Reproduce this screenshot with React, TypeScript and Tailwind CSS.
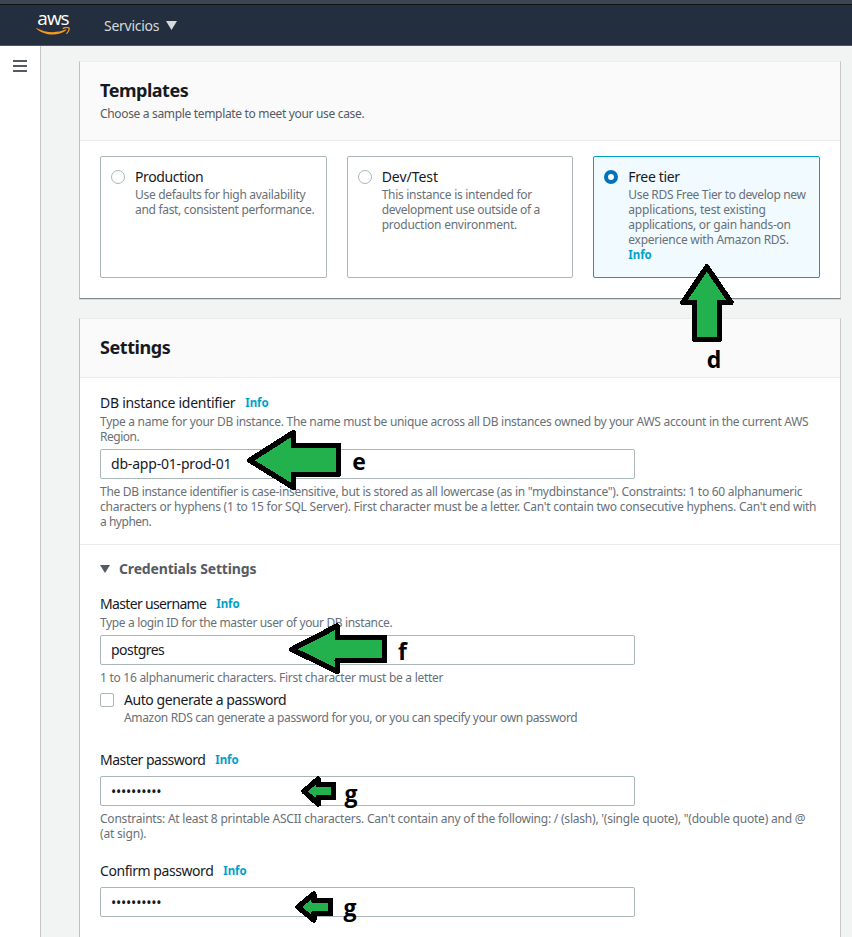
import React, { useLayoutEffect, useRef, useState } from "react";

type LineProps = { text: string; w: number; className?: string };

/** One line of text whose tracking is adjusted so that it spans `w` pixels. */
function Line({ text, w, className = "" }: LineProps) {
  const ref = useRef<HTMLSpanElement>(null);
  const [spacing, setSpacing] = useState(0);
  useLayoutEffect(() => {
    if (ref.current) {
      const natural = ref.current.getBoundingClientRect().width;
      setSpacing((w + 0.3 - natural) / text.length);
    }
  }, [text, w]);
  return (
    <span className={`flex overflow-visible whitespace-pre ${className}`}>
      <span ref={ref} className="block shrink-0" style={{ letterSpacing: `${spacing}px` }}>
        {text}
      </span>
    </span>
  );
}

function Hint({ lines, className = "" }: { lines: [string, number][]; className?: string }) {
  return (
    <div className={`text-[12px] leading-[15px] text-[#687078] ${className}`}>
      {lines.map(([text, w]) => (
        <Line key={text} text={text} w={w} />
      ))}
    </div>
  );
}

function Info() {
  return <Line text="Info" w={23} className="text-[11.5px] font-bold text-[#00a1c9]" />;
}

function Label({ text, w }: { text: string; w: number }) {
  return (
    <div className="flex h-[22px] items-center gap-[10px] leading-[22px] text-[#16191f]">
      <Line text={text} w={w} className="text-[14px]" />
      <Info />
    </div>
  );
}

function Field({ text, w, className = "" }: { text: string; w: number; className?: string }) {
  return (
    <div
      className={`h-[30px] w-[535px] rounded-[2px] border border-[#aab7b8] bg-white pt-[3px] pl-[10px] text-[14px] leading-[22px] text-[#16191f] ${className}`}
    >
      <Line text={text} w={w} />
    </div>
  );
}

function Dots({ className = "" }: { className?: string }) {
  return (
    <div
      className={`h-[30px] w-[535px] rounded-[2px] border border-[#aab7b8] bg-white pt-[4px] pl-[10px] text-[14px] leading-[22px] text-[#16191f] ${className}`}
    >
      <Line text="••••••••••" w={50} />
    </div>
  );
}

type TileProps = {
  title: string;
  w: number;
  lines: [string, number][];
  selected?: boolean;
};

function Tile({ title, w, lines, selected }: TileProps) {
  return (
    <div
      className={`flex h-[122px] gap-[10px] rounded-[2px] border pt-[9px] pl-[10px] ${
        selected ? "border-[#00a1c9] bg-[#f1faff]" : "border-[#aab7b8] bg-white"
      }`}
    >
      <span
        className={`mt-[4px] h-[14px] w-[14px] shrink-0 rounded-full bg-white ${
          selected ? "border-[4px] border-[#0073bb]" : "border border-[#aab7b8]"
        }`}
      />
      <div>
        <Line text={title} w={w} className="text-[14px] leading-[22px] text-[#16191f]" />
        <Hint lines={lines} className="-mt-px" />
        {selected && (
          <div className="leading-[15px]">
            <Info />
          </div>
        )}
      </div>
    </div>
  );
}

function Caret({ className }: { className: string }) {
  return (
    <svg viewBox="0 0 10 8" preserveAspectRatio="none" className={className}>
      <path d="M0 0H10L5 8Z" fill="currentColor" />
    </svg>
  );
}

const arrows = [
  "706.8,267 731,302.3 719.5,302.3 719.5,339.2 694.5,339.2 694.5,302.3 683,302.3",
  "249.8,460.3 293.5,432.5 293.5,445.5 338.5,445.5 338.5,474.2 293.5,474.2 293.5,487.5",
  "292,649.3 337.2,626 337.2,637.5 384.5,637.5 384.5,660.5 337.2,660.5 337.2,671.7",
  "304,791.3 318.2,779 318.2,784.5 333.5,784.5 333.5,797.5 318.2,797.5 318.2,804",
  "298,907 313.8,894 313.8,900.5 330.5,900.5 330.5,913.5 313.8,913.5 313.8,920",
];

const marks = [
  { t: "d", x: 714, y: 368 },
  { t: "e", x: 359, y: 470 },
  { t: "f", x: 402.5, y: 660 },
  { t: "g", x: 351, y: 802 },
  { t: "g", x: 350, y: 916 },
];

function Annotations() {
  return (
    <svg
      className="pointer-events-none absolute top-0 left-0 h-[937px] w-[852px] font-['Open_Sans',sans-serif]"
      viewBox="0 0 852 937"
    >
      {arrows.map((points) => (
        <polygon
          key={points}
          points={points}
          fill="#22b14c"
          stroke="#000"
          strokeWidth="5.4"
          strokeLinejoin="round"
          shapeRendering="crispEdges"
        />
      ))}
      {marks.map((m) => (
        <text key={m.y} x={m.x} y={m.y} textAnchor="middle" fontSize="23" fontWeight="700">
          {m.t}
        </text>
      ))}
    </svg>
  );
}

const cardBorder =
  "mx-[38px] w-[762px] border border-t-[#eaeded] border-r-[#c3caca] border-l-[#b9c1c2] bg-white";

export default function App() {
  return (
    <div className="relative flex h-[937px] w-[852px] flex-col overflow-hidden bg-[#f2f3f3] font-['Noto_Sans',sans-serif]">
      <header className="flex h-[46px] shrink-0 flex-col border-b border-[#4b5663] bg-[#232f3e]">
        <div className="h-[5px] border-b border-[#101215] bg-[#3b4652]" />
        <div className="flex h-[40px] pl-[36px]">
          <div className="flex w-[34px] flex-col items-center pt-[7px]">
            <Line
              text="aws"
              w={31}
              className="h-[15px] font-['Open_Sans',sans-serif] text-[19px] leading-[12px] font-medium text-white"
            />
            <svg viewBox="0 0 34 9" className="h-[9px] w-[34px] text-[#f79a1f]">
              <path
                d="M.4 1C9.5 6.2 21.5 6.2 29.6 2.6C30.4 2.4 30.8 3 30 3.6C22 9.2 8.5 9 .2 1.5Z"
                fill="currentColor"
              />
              <path
                d="M27.3 1.4C29.6 .3 32.2 .5 33 1C33.4 2.7 32.2 5 30.8 6.4"
                fill="none"
                stroke="currentColor"
                strokeWidth="1.3"
                strokeLinecap="round"
              />
            </svg>
          </div>
          <div className="ml-[34px] flex items-center gap-[7px] text-[#d5dbdb]">
            <Line text="Servicios" w={55} className="text-[14px]" />
            <Caret className="h-[9px] w-[11px]" />
          </div>
        </div>
      </header>

      <div className="flex flex-1">
        <aside className="w-[41px] shrink-0 border-r border-[#c1c7c7] bg-white">
          <div className="mt-[14px] ml-[13px] flex w-[14px] flex-col gap-[3px]">
            <span className="h-[2px] bg-[#545b64]" />
            <span className="h-[2px] bg-[#545b64]" />
            <span className="h-[2px] bg-[#545b64]" />
          </div>
        </aside>

        <main className="flex flex-1 flex-col pt-[15px]">
          <section className={`${cardBorder} h-[238px] border-b-[#7d8a8c] shadow-[0_1px_0_0_#d5dadb]`}>
            <div className="h-[79px] border-b border-[#eaeded] bg-[#fafafa] pt-[17px] pl-[20px]">
              <Line
                text="Templates"
                w={88}
                className="text-[18px] leading-[22px] font-bold text-[#16191f]"
              />
              <Line
                text="Choose a sample template to meet your use case."
                w={264}
                className="mt-[5px] text-[12px] leading-[16px] text-[#545b64]"
              />
            </div>
            <div className="grid grid-cols-3 gap-[20px] px-[20px] pt-[15px]">
              <Tile
                title="Production"
                w={68}
                lines={[
                  ["Use defaults for high availability", 170],
                  ["and fast, consistent performance.", 179],
                ]}
              />
              <Tile
                title="Dev/Test"
                w={56}
                lines={[
                  ["This instance is intended for", 150],
                  ["development use outside of a", 158],
                  ["production environment.", 135],
                ]}
              />
              <Tile
                selected
                title="Free tier"
                w={51}
                lines={[
                  ["Use RDS Free Tier to develop new", 177],
                  ["applications, test existing", 137],
                  ["applications, or gain hands-on", 162],
                  ["experience with Amazon RDS.", 160],
                ]}
              />
            </div>
          </section>

          <section className={`${cardBorder} mt-[19px] h-[640px] border-b-[#7d8a8c]`}>
            <div className="h-[59px] border-b border-[#eaeded] bg-[#fafafa] pt-[17px] pl-[20px]">
              <Line
                text="Settings"
                w={70}
                className="text-[18px] leading-[22px] font-bold text-[#16191f]"
              />
            </div>

            <div className="h-[167px] border-b border-[#eaeded] pt-[14px] pl-[20px]">
              <Label text="DB instance identifier" w={135} />
              <Hint
                lines={[
                  [
                    "Type a name for your DB instance. The name must be unique across all DB instances owned by your AWS account in the current AWS",
                    708,
                  ],
                  ["Region.", 39],
                ]}
              />
              <Field text="db-app-01-prod-01" w={120} className="mt-[5px]" />
              <Hint
                className="mt-[5px]"
                lines={[
                  [
                    'The DB instance identifier is case-insensitive, but is stored as all lowercase (as in "mydbinstance"). Constraints: 1 to 60 alphanumeric',
                    702,
                  ],
                  [
                    "characters or hyphens (1 to 15 for SQL Server). First character must be a letter. Can't contain two consecutive hyphens. Can't end with",
                    716,
                  ],
                  ["a hyphen.", 51],
                ]}
              />
            </div>

            <div className="pt-[12px] pl-[20px]">
              <div className="flex h-[22px] items-center gap-[9px] text-[#545b64]">
                <Caret className="mt-[2px] h-[8px] w-[10px]" />
                <Line text="Credentials Settings" w={137} className="text-[14px] font-bold" />
              </div>

              <div className="mt-[14px]">
                <Label text="Master username" w={106} />
                <Hint lines={[["Type a login ID for the master user of your DB instance.", 292]]} />
                <Field text="postgres" w={53} className="mt-[5px]" />
                <Hint
                  className="mt-[5px]"
                  lines={[["1 to 16 alphanumeric characters. First character must be a letter", 343]]}
                />
              </div>

              <div className="mt-[4px] flex gap-[10px]">
                <span className="mt-[4px] h-[14px] w-[14px] rounded-[2px] border border-[#aab7b8] bg-white" />
                <div>
                  <Line
                    text="Auto generate a password"
                    w={162}
                    className="text-[14px] leading-[22px] text-[#16191f]"
                  />
                  <Hint
                    className="-mt-px"
                    lines={[
                      [
                        "Amazon RDS can generate a password for you, or you can specify your own password",
                        453,
                      ],
                    ]}
                  />
                </div>
              </div>

              <div className="mt-[24px]">
                <Label text="Master password" w={105} />
                <Dots className="mt-[5px]" />
                <Hint
                  className="mt-[5px]"
                  lines={[
                    [
                      "Constraints: At least 8 printable ASCII characters. Can't contain any of the following: / (slash), '(single quote), \"(double quote) and @",
                      705,
                    ],
                    ["(at sign).", 46],
                  ]}
                />
              </div>

              <div className="mt-[19px]">
                <Label text="Confirm password" w={113} />
                <Dots className="mt-[5px]" />
              </div>
            </div>
          </section>
        </main>
      </div>
      <Annotations />
    </div>
  );
}
